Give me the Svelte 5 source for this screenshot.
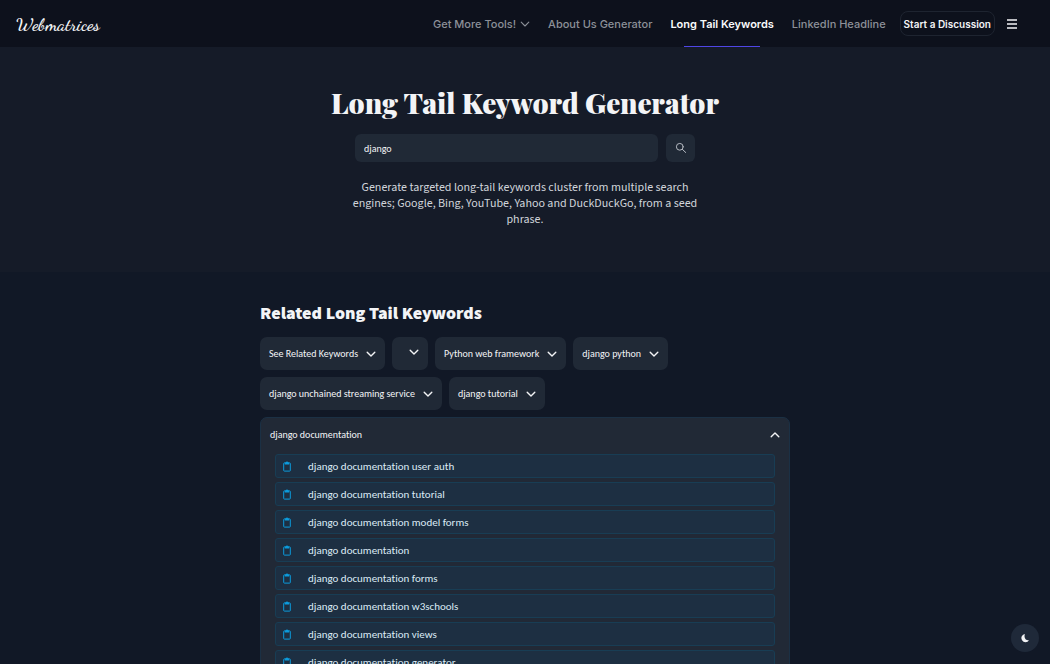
<script>
  let query = $state('django');
  const chips = [
    'See Related Keywords',
    '',
    'Python web framework',
    'django python',
    'django unchained streaming service',
    'django tutorial'
  ];
  const keywords = [
    'django documentation user auth',
    'django documentation tutorial',
    'django documentation model forms',
    'django documentation',
    'django documentation forms',
    'django documentation w3schools',
    'django documentation views',
    'django documentation generator'
  ];
</script>

{#snippet chevron()}
  <svg class="chevron" viewBox="0 0 10 10" aria-hidden="true"><path d="M1.2 3.2 5 7l3.8-3.8" /></svg>
{/snippet}

<div class="page">
  <header>
    <a class="logo" href="#home">Webmatrices</a>
    <nav>
      <button class="navlink" type="button">Get More Tools! {@render chevron()}</button>
      <a class="navlink" href="#about">About Us Generator</a>
      <a class="navlink active" href="#keywords" aria-current="page">Long Tail Keywords</a>
      <a class="navlink" href="#headline">LinkedIn Headline</a>
    </nav>
    <button class="discuss" type="button">Start a Discussion</button>
    <button class="menu" type="button" aria-label="Menu">
      <svg viewBox="0 0 12 12" aria-hidden="true"><path d="M1 2h10M1 6h10M1 10h10" /></svg>
    </button>
  </header>

  <section class="hero">
    <h1>Long Tail Keyword Generator</h1>
    <form onsubmit={(e) => e.preventDefault()}>
      <input type="text" aria-label="Seed phrase" bind:value={query} />
      <button type="submit" aria-label="Search">
        <svg viewBox="0 0 12 12" aria-hidden="true"><circle cx="4.8" cy="4.8" r="3.4" /><path d="m7.4 7.4 3.3 3.1" /></svg>
      </button>
    </form>
    <p>
      Generate targeted long-tail keywords cluster from multiple search engines; Google, Bing,
      YouTube, Yahoo and DuckDuckGo, from a seed phrase.
    </p>
  </section>

  <main id="keywords">
    <h2>Related Long Tail Keywords</h2>
    <div class="chips">
      {#each chips as chip}
        <button class="chip" class:blank={!chip} type="button" aria-label={chip ? undefined : 'Expand'}>
          <span>{chip}</span>{@render chevron()}
        </button>
      {/each}
    </div>
    <section class="panel">
      <button class="panel-head" type="button" aria-expanded="true">
        <span>django documentation</span>
        <svg class="chevron" viewBox="0 0 10 10" aria-hidden="true"><path d="M1.2 6.8 5 3l3.8 3.8" /></svg>
      </button>
      <ul>
        {#each keywords as keyword}
          <li>
            <button class="copy" type="button" aria-label="Copy {keyword}">
              <svg viewBox="0 0 8 11" aria-hidden="true">
                <rect x="0.7" y="1.9" width="6.6" height="8.2" rx="0.6" />
                <path class="clip" d="M1.8 3.6V1.5h1.1a1.1 1.1 0 0 1 2.2 0h1.1v2.1z" />
              </svg>
            </button>
            {keyword}
          </li>
        {/each}
      </ul>
    </section>
  </main>

  <button class="theme" type="button" aria-label="Toggle dark mode">
    <svg viewBox="0 0 10 10" aria-hidden="true"><path d="M5 1A4.100 4.100 0 1 0 9 7.200C5.800 7.800 3.400 4.400 5 1Z" /></svg>
  </button>
</div>

<style>
  :global(body) {
    margin: 0;
    background: #111826;
  }
  .page {
    height: 100vh;
    overflow-y: auto;
    scrollbar-width: none;
    background: #111826;
    color: #f3f4f6;
    font-family: Carlito, Lato, sans-serif;
    font-variant-ligatures: no-common-ligatures;
  }
  .page * {
    box-sizing: border-box;
  }
  button {
    margin: 0;
    padding: 0;
    border: 0;
    background: none;
    color: inherit;
    font-family: inherit;
    font-variant-ligatures: inherit;
    cursor: pointer;
  }
  a {
    color: inherit;
    text-decoration: none;
  }
  svg {
    display: block;
    flex: none;
    fill: none;
    stroke: currentColor;
  }
  .chevron {
    width: 10px;
    height: 10px;
    stroke-width: 1.4;
    stroke-linecap: round;
    stroke-linejoin: round;
  }
  .navlink .chevron {
    stroke-width: 1.1;
  }
  header {
    display: flex;
    align-items: center;
    height: 47px;
    padding: 0 32px 0 16px;
    background: #0d111c;
    font-family: Inter, sans-serif;
  }
  .logo {
    margin-right: auto;
    font: 600 18px/24px 'Dancing Script', 'Liberation Serif', serif;
  }
  nav {
    display: flex;
    align-self: stretch;
    gap: 18px;
    margin-right: 14px;
  }
  .navlink {
    position: relative;
    display: flex;
    align-items: center;
    gap: 4px;
    color: #8c9098;
    font-size: 11px;
    font-weight: 500;
    white-space: nowrap;
  }
  .active {
    color: #f9fafb;
    font-weight: 600;
  }
  .active::after {
    content: '';
    position: absolute;
    right: 14px;
    bottom: 0;
    left: 14px;
    height: 1px;
    background: #4f46e5;
  }
  .discuss {
    height: 25px;
    padding: 0 3px;
    border: 1px solid #1e2430;
    border-radius: 8px;
    font-size: 10px;
    font-weight: 600;
    white-space: nowrap;
  }
  .menu {
    margin-left: 11px;
  }
  .menu svg {
    width: 12px;
    height: 12px;
    stroke-width: 1.4;
  }
  .hero {
    padding: 36px 16px 44px;
    background: #151b28;
    text-align: center;
  }
  h1 {
    margin: 0;
    font: 900 28px/40px 'Playfair Display', 'Liberation Serif', serif;
  }
  form {
    display: flex;
    gap: 8px;
    max-width: 340px;
    margin: 11px auto 18px;
  }
  input {
    flex: 1;
    min-width: 0;
    height: 28px;
    padding: 0 9px;
    border: 0;
    border-radius: 6px;
    background: #202936;
    color: inherit;
    font: 10px/16px Carlito, Lato, sans-serif;
  }
  form button {
    display: grid;
    place-items: center;
    width: 29px;
    height: 28px;
    border-radius: 6px;
    background: #202936;
    color: #b5bac2;
  }
  form svg {
    width: 12px;
    height: 12px;
    stroke-linecap: round;
  }
  .hero p {
    max-width: 350px;
    margin: 0 auto;
    color: #d1d5db;
    font: 12px/16px 'Source Sans 3', 'Source Sans Pro', 'Noto Sans CJK SC', sans-serif;
  }
  main {
    max-width: 562px;
    margin: 0 auto;
    padding: 30px 16px 24px;
  }
  h2 {
    margin: 0 0 11px;
    font: 900 18px/24px 'Source Sans 3', 'Source Sans Pro', 'Noto Sans CJK SC', sans-serif;
  }
  .chips {
    display: flex;
    flex-wrap: wrap;
    gap: 7px;
    max-width: 424px;
  }
  .chip {
    display: flex;
    align-items: center;
    gap: 8px;
    height: 33px;
    padding: 0 9px;
    border-radius: 7px;
    background: #202936;
    font-size: 10px;
    white-space: nowrap;
  }
  .blank {
    align-items: flex-start;
    padding: 10px 9px;
  }
  .panel {
    margin-top: 7px;
    padding: 0 14px 14px;
    border: 1px solid #1b3044;
    border-radius: 7px;
    background: #212936;
  }
  .panel-head {
    display: flex;
    align-items: center;
    justify-content: space-between;
    width: calc(100% + 10px);
    height: 33px;
    margin: 0 -5px;
    font-size: 10px;
  }
  ul {
    display: grid;
    gap: 4px;
    margin: 3px 0 0;
    padding: 0;
    list-style: none;
  }
  li {
    display: flex;
    align-items: center;
    gap: 17px;
    height: 24px;
    padding: 0 7px;
    border: 1px solid #183d54;
    border-radius: 3px;
    background: #1d2f42;
    color: #dcebf5;
    font-size: 11px;
  }
  .copy {
    color: #0c9bdc;
  }
  .copy svg {
    width: 8px;
    height: 11px;
  }
  .clip {
    fill: currentColor;
    stroke: none;
  }
  .theme {
    position: fixed;
    right: 11px;
    bottom: 12px;
    display: grid;
    place-items: center;
    width: 28px;
    height: 28px;
    border-radius: 50%;
    background: #1f2939;
  }
  .theme svg {
    width: 10px;
    height: 10px;
    fill: currentColor;
    stroke: none;
  }
</style>
